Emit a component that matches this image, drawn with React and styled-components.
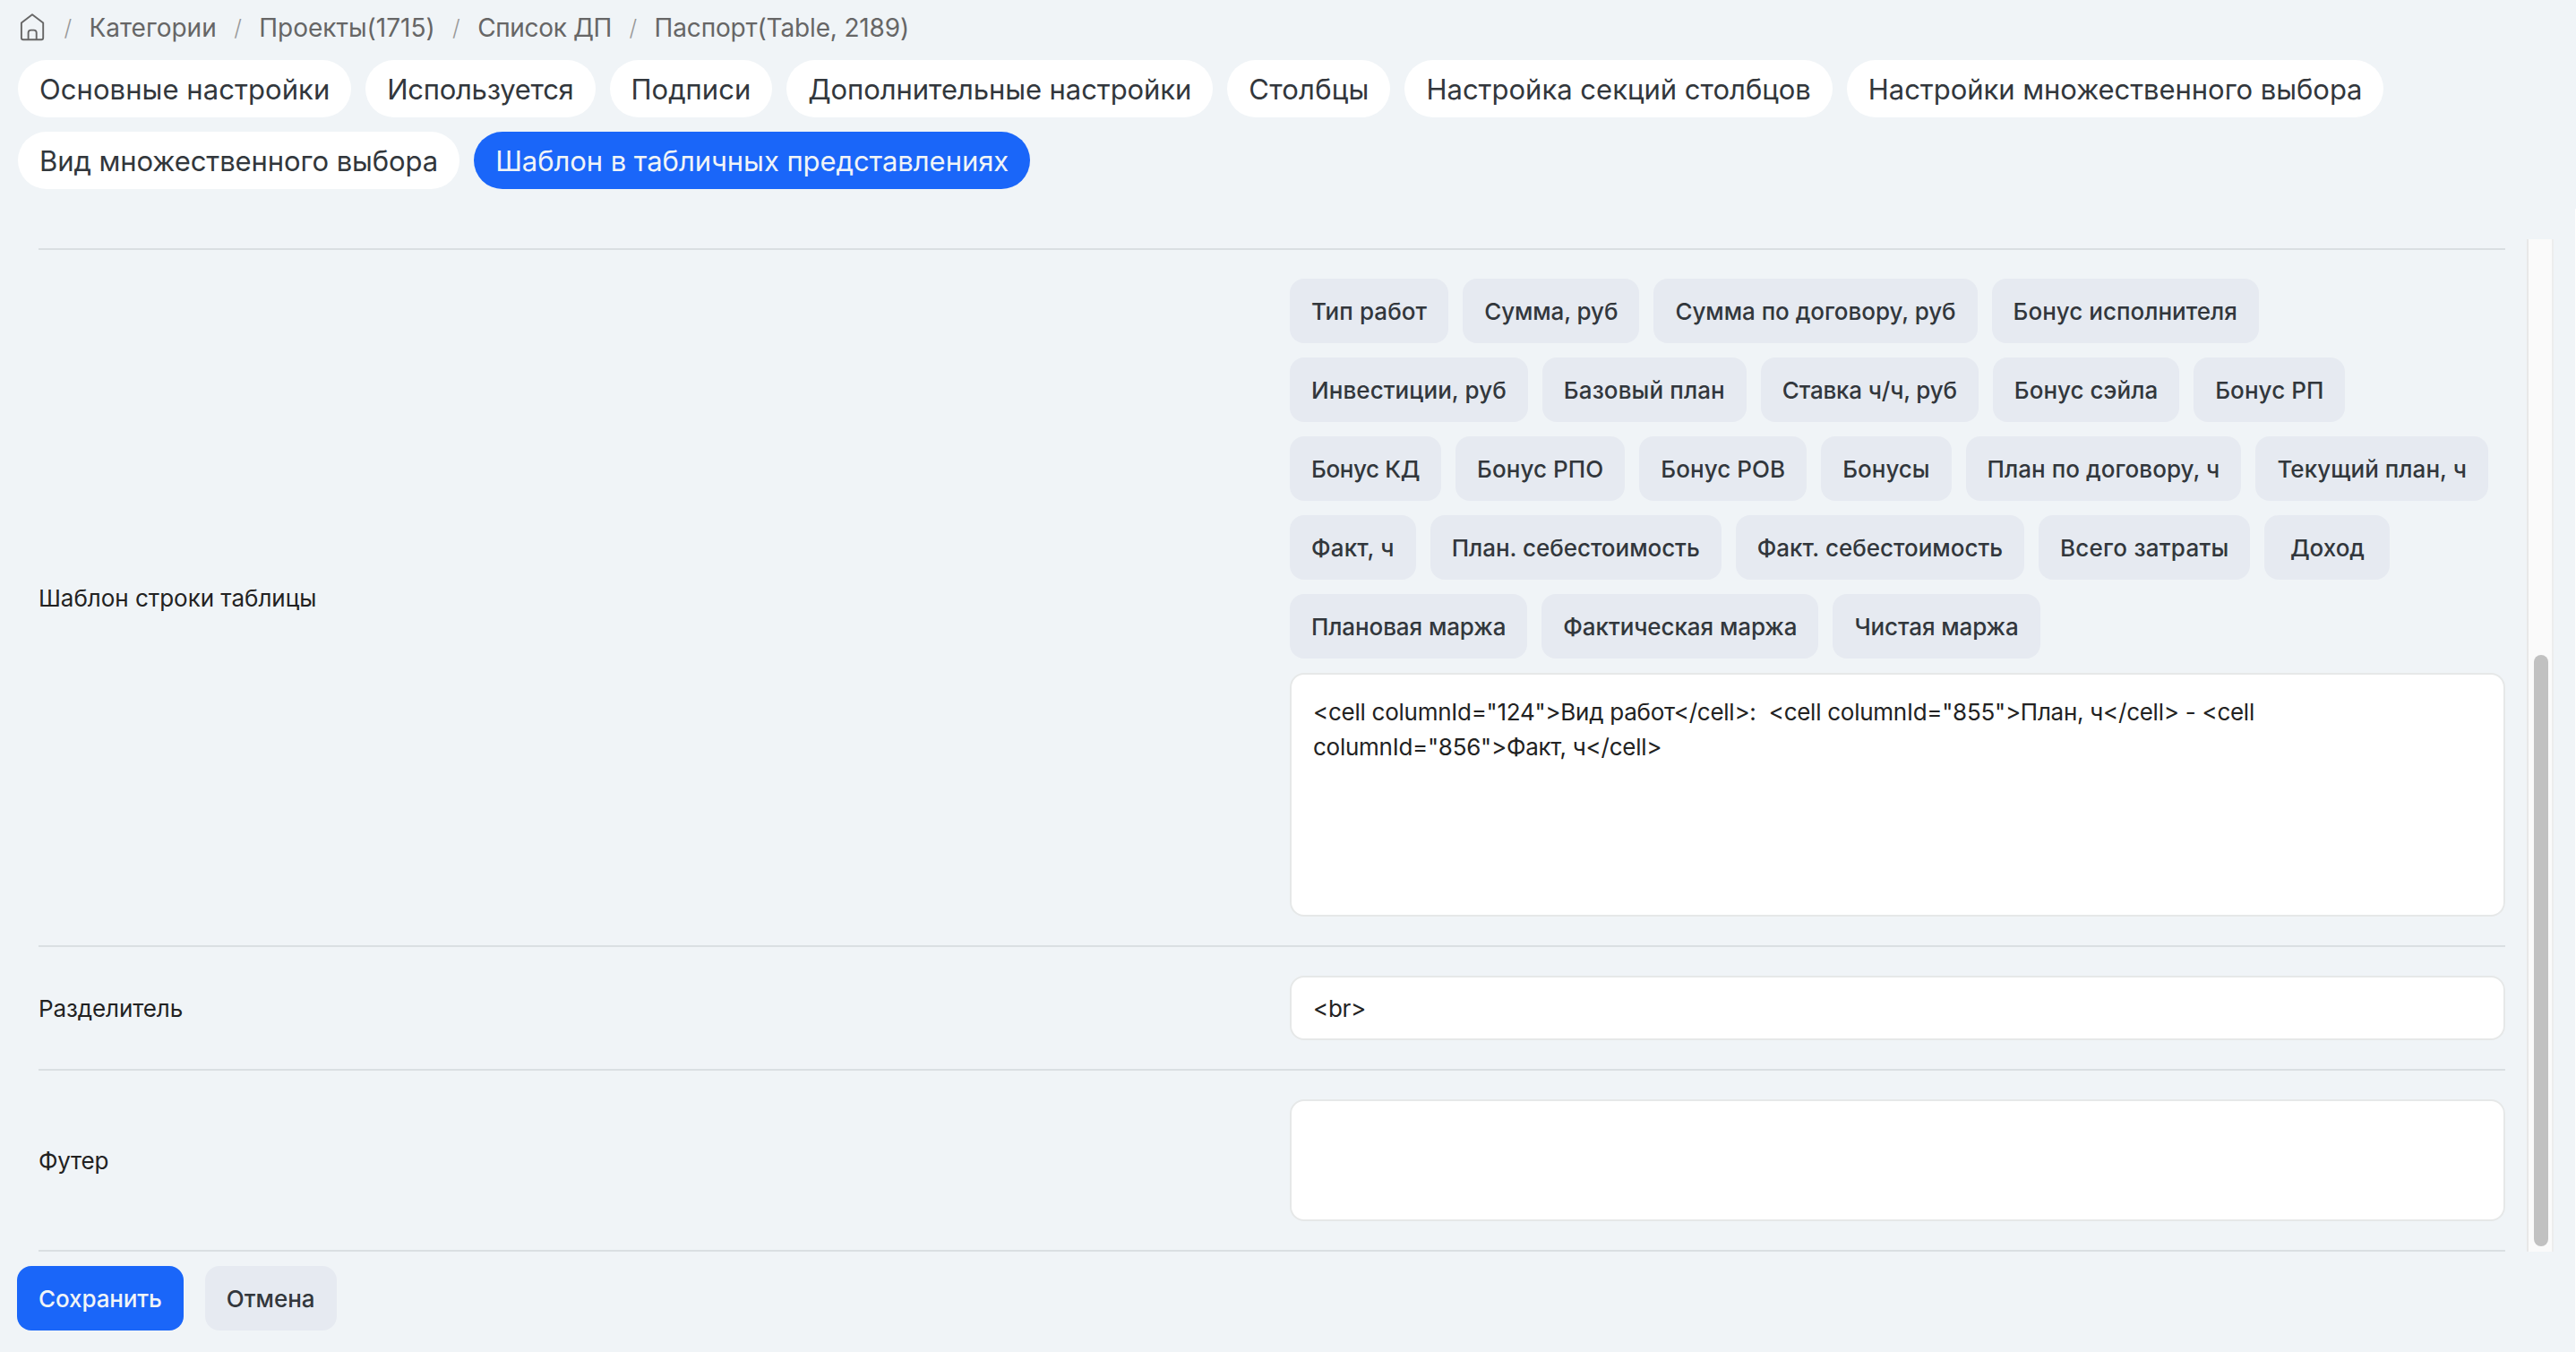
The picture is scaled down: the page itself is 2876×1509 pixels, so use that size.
import React, { useState } from "react";
import styled, { createGlobalStyle } from "styled-components";

const crumbs = [
  { label: "Категории", track: 0 },
  { label: "Проекты(1715)", track: 0 },
  { label: "Список ДП", track: -0.35 },
  { label: "Паспорт(Table, 2189)", track: -0.15 },
];

const tabs = [
  { label: "Основные настройки", track: 0.06 },
  { label: "Используется", track: -0.28 },
  { label: "Подписи", track: 0 },
  { label: "Дополнительные настройки", track: -0.07 },
  { label: "Столбцы", track: 0.2 },
  { label: "Настройка секций столбцов", track: 0 },
  { label: "Настройки множественного выбора", track: -0.05 },
  { label: "Вид множественного выбора", track: -0.08 },
  { label: "Шаблон в табличных представлениях", track: -0.05 },
];

const columns = [
  { label: "Тип работ", track: 0.08 },
  { label: "Сумма, руб", track: -0.1 },
  { label: "Сумма по договору, руб", track: -0.05 },
  { label: "Бонус исполнителя", track: 0.02 },
  { label: "Инвестиции, руб", track: 0.07 },
  { label: "Базовый план", track: 0.12 },
  { label: "Ставка ч/ч, руб", track: -0.19 },
  { label: "Бонус сэйла", track: 0.03 },
  { label: "Бонус РП", track: 0.07 },
  { label: "Бонус КД", track: -0.38 },
  { label: "Бонус РПО", track: 0.07 },
  { label: "Бонус РОВ", track: 0.08 },
  { label: "Бонусы", track: 0 },
  { label: "План по договору, ч", track: 0.05 },
  { label: "Текущий план, ч", track: 0.04 },
  { label: "Факт, ч", track: 0.18 },
  { label: "План. себестоимость", track: -0.04 },
  { label: "Факт. себестоимость", track: 0 },
  { label: "Всего затраты", track: 0.24 },
  { label: "Доход", track: 0 },
  { label: "Плановая маржа", track: -0.1 },
  { label: "Фактическая маржа", track: -0.08 },
  { label: "Чистая маржа", track: -0.12 },
];

const rowTemplate =
  '<cell columnId="124">Вид работ</cell>:  <cell columnId="855">План, ч</cell> - <cell columnId="856">Факт, ч</cell>';

const HomeIcon = () => (
  <svg width="32" height="32" viewBox="0 0 32 32" fill="none" stroke="#666" strokeWidth="1.9" strokeLinejoin="round">
    <path d="M16 1.2 L28.2 10.4 V27.2 a2 2 0 0 1 -2 2 H5.9 a2 2 0 0 1 -2 -2 V10.4 Z" />
    <path d="M11.6 29 V21.6 a3 3 0 0 1 3 -3 h3.1 a3 3 0 0 1 3 3 V29" />
  </svg>
);

const App = () => {
  const [active, setActive] = useState(tabs.length - 1);
  const [template, setTemplate] = useState(rowTemplate);
  const [separator, setSeparator] = useState("<br>");
  const [footer, setFooter] = useState("");

  return (
    <Page>
      <GlobalStyle />
      <Breadcrumbs>
        <HomeIcon />
        {crumbs.map(({ label, track }) => (
          <React.Fragment key={label}>
            <Slash>/</Slash>
            <Crumb $track={track}>{label}</Crumb>
          </React.Fragment>
        ))}
      </Breadcrumbs>

      <Tabs>
        {tabs.map(({ label, track }, i) => (
          <Tab key={label} $track={track} $active={i === active} onClick={() => setActive(i)}>
            {label}
          </Tab>
        ))}
      </Tabs>

      <Panel>
        <Scroller>
          <Form>
            <Row>
              <Label>Шаблон строки таблицы</Label>
              <Field>
                <Chips>
                  {columns.map(({ label, track }) => (
                    <Button key={label} $track={track}>
                      {label}
                    </Button>
                  ))}
                </Chips>
                <TextArea $height={272} value={template} onChange={(e) => setTemplate(e.target.value)} />
              </Field>
            </Row>
            <Row>
              <Label $track={-0.1}>Разделитель</Label>
              <Input value={separator} onChange={(e) => setSeparator(e.target.value)} />
            </Row>
            <Row>
              <Label $track={-0.2}>Футер</Label>
              <TextArea $height={136} value={footer} onChange={(e) => setFooter(e.target.value)} />
            </Row>
          </Form>
          <Track>
            <Thumb />
          </Track>
        </Scroller>

        <Actions>
          <Button $primary $track={-0.1}>Сохранить</Button>
          <Button>Отмена</Button>
        </Actions>
      </Panel>
    </Page>
  );
};

const GlobalStyle = createGlobalStyle`
  * {
    box-sizing: border-box;
  }
  body {
    margin: 0;
    overflow: hidden;
    background: #f0f4f7;
    font-family: Inter, "Noto Sans", sans-serif;
  }
  button, input, textarea {
    font-family: inherit;
    outline: none;
  }
`;

const Page = styled.div`
  display: flex;
  flex-direction: column;
  height: 100vh;
`;

const Breadcrumbs = styled.nav`
  display: flex;
  align-items: center;
  height: 62px;
  padding-left: 20px;
  color: #666;
  font-size: 28px;
`;

const Crumb = styled.span`
  letter-spacing: ${({ $track }) => $track}px;
`;

const Slash = styled.span`
  width: 47.5px;
  color: #999;
  font-size: 25px;
  font-weight: 300;
  text-align: center;
`;

const Tabs = styled.div`
  display: flex;
  flex-wrap: wrap;
  gap: 16px;
  padding: 5px 20px 0;
`;

const Tab = styled.button`
  height: 64px;
  padding: 0 24px;
  border: none;
  border-radius: 32px;
  background: ${({ $active }) => ($active ? "#1a66f9" : "#fff")};
  color: ${({ $active }) => ($active ? "#f0f4f7" : "#32373c")};
  font-size: 31px;
  letter-spacing: ${({ $track }) => $track}px;
  white-space: nowrap;
  cursor: pointer;
`;

const Panel = styled.section`
  flex: 1;
  margin-top: 22px;
  padding-top: 34px;
  border-right: 1px solid #fff;
`;

const Scroller = styled.div`
  display: flex;
  justify-content: space-between;
  height: 1130px;
  padding: 0 24px 0 43px;
`;

const Form = styled.div`
  width: 2754px;
  padding-top: 10px;
`;

const Row = styled.div`
  display: grid;
  grid-template-columns: 1397px 1fr;
  align-items: center;
  padding: 32px 0;
  border-bottom: 2px solid #dadfe2;

  &:first-child {
    border-top: 2px solid #dadfe2;
  }
`;

const Label = styled.label`
  color: #222;
  font-size: 26px;
  letter-spacing: ${({ $track = -0.03 }) => $track}px;
`;

const Field = styled.div`
  display: flex;
  flex-direction: column;
  gap: 16px;
`;

const Chips = styled.div`
  display: flex;
  flex-wrap: wrap;
  gap: 16px;
`;

const Button = styled.button`
  min-width: 140px;
  height: 72px;
  padding: 0 24px;
  border: none;
  border-radius: 16px;
  background: ${({ $primary }) => ($primary ? "#1a66f9" : "#e6eaf1")};
  color: ${({ $primary }) => ($primary ? "#f0f4f7" : "#32373c")};
  font-size: 26px;
  font-weight: 500;
  letter-spacing: ${({ $track = 0 }) => $track}px;
  white-space: nowrap;
  cursor: pointer;
`;

const Input = styled.input`
  width: 100%;
  height: 72px;
  padding: 0 24px;
  border: 2px solid #e6e8e8;
  border-radius: 16px;
  background: #fff;
  color: #222;
  font-size: 26px;
  letter-spacing: -0.28px;
`;

const TextArea = styled.textarea`
  display: block;
  width: 100%;
  height: ${({ $height }) => $height}px;
  padding: 22px 24px;
  border: 2px solid #e6e8e8;
  border-radius: 16px;
  background: #fff;
  color: #222;
  font-size: 26px;
  line-height: 39px;
  letter-spacing: -0.26px;
  resize: none;
`;

const Track = styled.div`
  width: 30px;
  padding: 464px 4px 6px 6px;
  border: solid #e8e8e8;
  border-width: 0 2px;
  border-right-color: #ededed;
  background: #fafafa;
`;

const Thumb = styled.div`
  height: 100%;
  border-radius: 8px;
  background: #c1c1c1;
`;

const Actions = styled.div`
  display: flex;
  gap: 24px;
  padding: 16px 19px;
`;

export default App;
